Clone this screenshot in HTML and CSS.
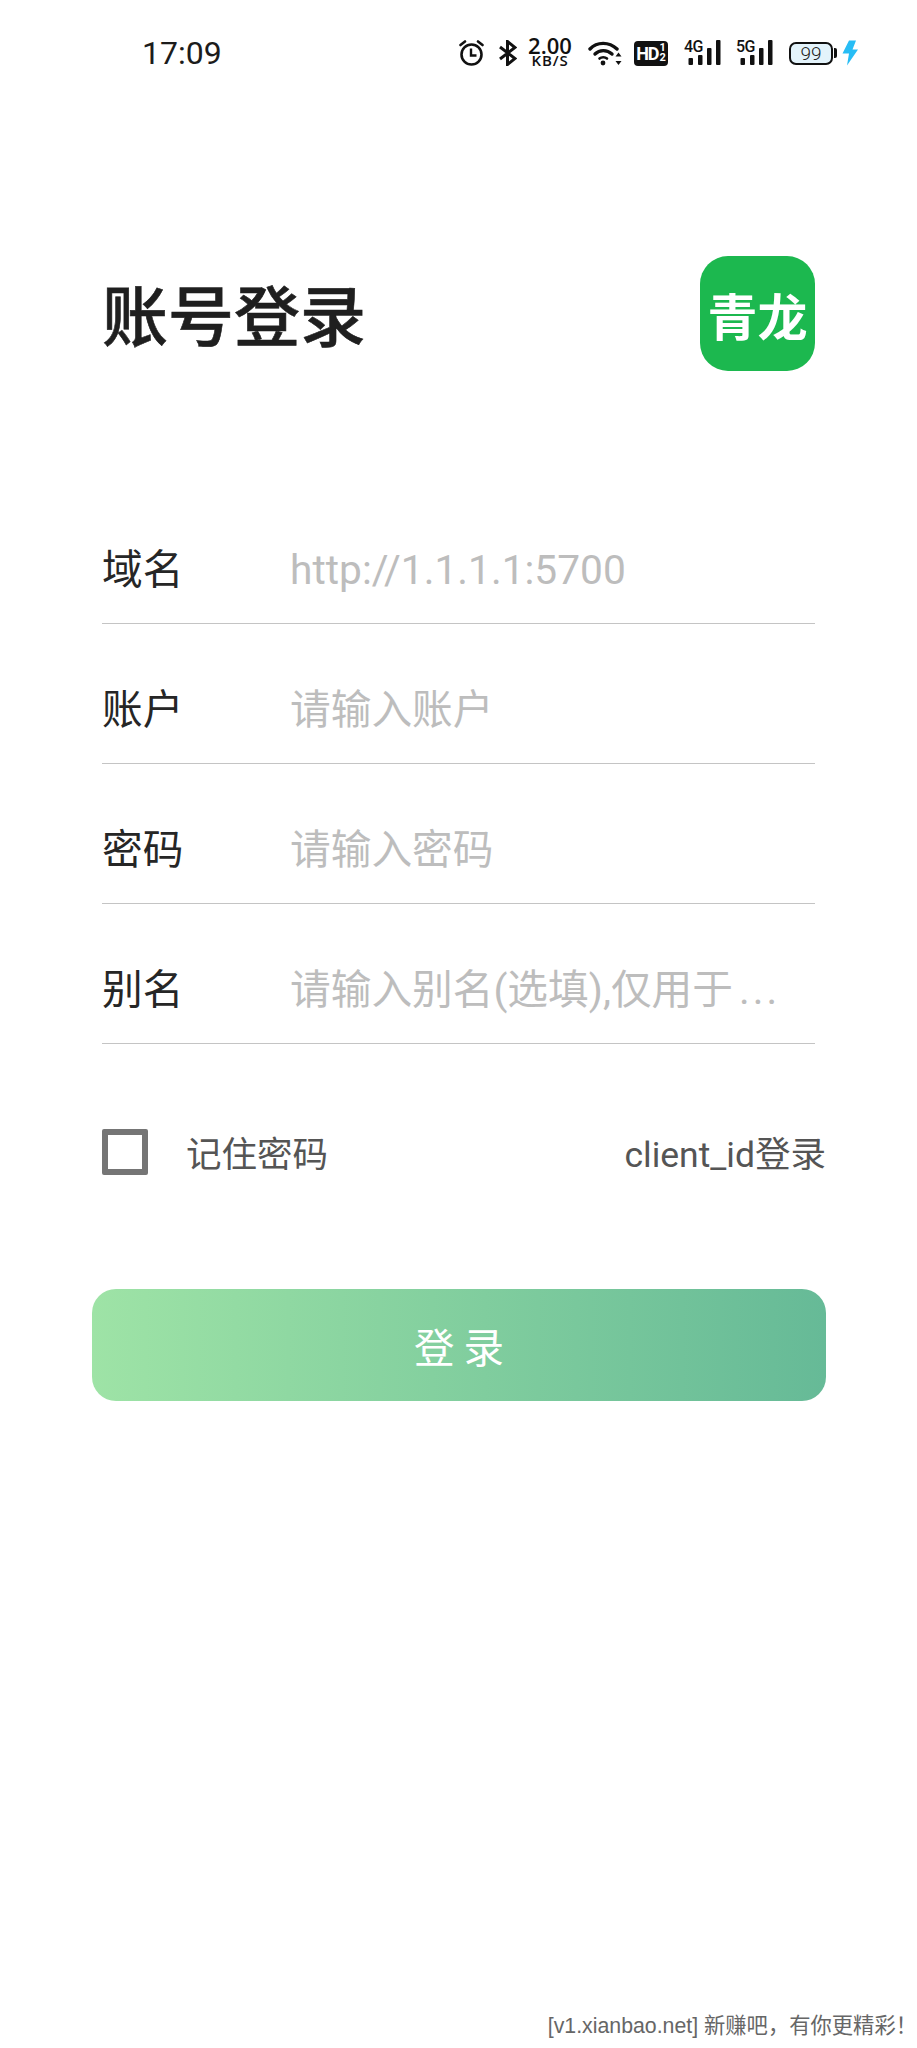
FILE: index.html
```html
<!DOCTYPE html>
<html lang="zh-CN">
<head>
<meta charset="UTF-8" />
<title>账号登录</title>
<link rel="stylesheet" href="styles.css">
</head>
<body>

<!-- Barra de status -->
<div class="status">
  <div class="time">17:09</div>
  <div class="icons">
    <svg class="ic-alarm" width="26" height="26" viewBox="0 0 26 26" fill="none" stroke="#111" stroke-width="2.6">
      <circle cx="12.5" cy="14.5" r="10" />
      <path d="M12 8.5V15.5H17.5" stroke-width="2.4" />
      <path d="M1.5 5L6 1.5M23.5 5L19 1.5" stroke-linecap="round" />
    </svg>
    <svg class="ic-bt" width="18" height="26" viewBox="0 0 18 26" fill="none" stroke="#111" stroke-width="3">
      <path d="M1 7L16 18.5L8.5 24.5V1.5L16 7.5L1 19" />
    </svg>
    <div class="speed">2.00 KB/S</div>
    <svg class="ic-wifi" width="34" height="26" viewBox="0 0 34 26" fill="none" stroke="#111" stroke-width="3.4" stroke-linecap="round">
      <path d="M2 9C9 1.5 21 1.5 29 9" />
      <path d="M7 14C11.5 9.5 19 9.5 24 14" />
      <path d="M11.5 18.5C13.5 16.8 17 16.8 19 18.5" stroke-width="2.6" />
      <circle cx="15" cy="23" r="2.4" fill="#111" stroke="none" />
      <path d="M30.5 12.5L27.5 16.5H33.5ZM30.5 25L27.5 21H33.5Z" fill="#111" stroke="none" />
    </svg>
    <div class="hd"><span class="hd-text">HD</span><span class="hd-frac"><span>1</span><span>2</span></span></div>
    <div class="signal sig-4g">
      <span class="net">4G</span>
      <svg width="37" height="26" viewBox="0 0 37 26" fill="#111">
        <rect x="4.5" y="18" width="4.5" height="7" rx="1" />
        <rect x="14" y="15" width="4.5" height="10" rx="1" />
        <rect x="23" y="8" width="4.5" height="17" rx="1" />
        <rect x="32" y="0" width="4.5" height="25" rx="1" />
      </svg>
    </div>
    <div class="signal">
      <span class="net">5G</span>
      <svg width="37" height="26" viewBox="0 0 37 26" fill="#111">
        <rect x="4.5" y="18" width="4.5" height="7" rx="1" />
        <rect x="14" y="15" width="4.5" height="10" rx="1" />
        <rect x="23" y="8" width="4.5" height="17" rx="1" />
        <rect x="32" y="0" width="4.5" height="25" rx="1" />
      </svg>
    </div>
    <div class="battery"><div class="battery-body">99</div><div class="battery-tip"></div></div>
    <svg class="ic-bolt" width="16" height="26" viewBox="0 0 16 26" fill="#27bdf5">
      <path d="M7 0.5H14L10.5 9.5H16L5 25.5L7 13.5H0.5Z" />
    </svg>
  </div>
</div>

<div class="page">
  <div class="header">
    <h1 class="title">账号登录</h1>
    <div class="logo">青龙</div>
  </div>

  <div class="form">
    <div class="row"><span class="label">域名</span><span class="hint">http://1.1.1.1:5700</span></div>
    <div class="row"><span class="label">账户</span><span class="hint">请输入账户</span></div>
    <div class="row"><span class="label">密码</span><span class="hint">请输入密码</span></div>
    <div class="row"><span class="label">别名</span><span class="hint">请输入别名(选填),仅用于<span class="dots">...</span></span></div>
  </div>

  <div class="options">
    <div class="check"></div>
    <span class="remember">记住密码</span>
    <span class="client">client_id登录</span>
  </div>

  <button class="login" type="button">登录</button>
</div>

<div class="footer">[v1.xianbao.net] 新赚吧，有你更精彩！</div>

</body>
</html>
```

FILE: styles.css
```css
body {
  margin: 0;
  min-height: 2048px;
  background: #fff;
  display: flex;
  flex-direction: column;
  font-family: Roboto, "Noto Sans CJK SC", sans-serif;
  color: #222;
}

/* Barra de status */
.status {
  height: 104px;
  box-sizing: border-box;
  padding: 2px 59px 0 142px;
  display: flex;
  align-items: center;
  justify-content: space-between;
}
.time {
  font-size: 32px;
  color: #1c1c1c;
}
.icons {
  display: flex;
  align-items: center;
}
.ic-alarm { margin-right: 14px; }
.ic-bt { margin-right: 10px; }
.speed {
  width: 46px;
  margin-right: 15px;
  font-family: "Open Sans", sans-serif;
  font-size: 15px;
  font-weight: 600;
  letter-spacing: 0.9px;
  line-height: 15px;
  text-align: center;
  color: #111;
}
.speed::first-line {
  font-size: 22px;
  letter-spacing: 0;
}
.ic-wifi { margin-right: 12px; }
.hd {
  width: 34px;
  height: 25px;
  background: #111;
  border-radius: 4px;
  color: #fff;
  display: flex;
  align-items: center;
  justify-content: center;
  margin-right: 16px;
}
.hd-text {
  font-size: 18px;
  font-weight: 700;
  letter-spacing: -1px;
}
.hd-frac {
  display: flex;
  flex-direction: column;
  font-size: 11px;
  line-height: 10px;
  font-weight: 700;
  margin-left: 1px;
}
.signal {
  position: relative;
  width: 37px;
  height: 26px;
  margin-right: 16px;
}
.sig-4g { margin-right: 15px; }
.signal svg { display: block; }
.net {
  position: absolute;
  top: -1px;
  left: 0;
  font-size: 16px;
  line-height: 15px;
  font-weight: 500;
  color: #111;
  letter-spacing: -0.5px;
}
.battery {
  display: flex;
  align-items: center;
  margin-right: 5px;
}
.battery-body {
  width: 40px;
  height: 19px;
  border: 2.5px solid #111;
  border-radius: 7px;
  background: #e3f3fb;
  font-size: 19px;
  font-weight: 300;
  line-height: 19px;
  text-align: center;
  color: #222;
}
.battery-tip {
  width: 3px;
  height: 10px;
  margin-left: 1px;
  background: #111;
  border-radius: 0 2px 2px 0;
}

/* Conteudo */
.page {
  width: 734px;
  margin-left: 92px;
}
.header {
  display: flex;
  justify-content: space-between;
  align-items: center;
  margin: 152px 11px 0 10px;
}
.title {
  margin: 0 0 4px;
  font-size: 66px;
  font-weight: 500;
  -webkit-text-stroke: 0.6px #1f1f1f;
  color: #1f1f1f;
}
.logo {
  width: 115px;
  height: 115px;
  border-radius: 28px;
  background: #1cb84f;
  color: #fff;
  font-size: 50px;
  font-weight: 700;
  display: flex;
  align-items: center;
  justify-content: center;
  white-space: nowrap;
}
.form {
  margin: 113px 11px 0 10px;
}
.row {
  height: 140px;
  box-sizing: border-box;
  padding-top: 56px;
  border-bottom: 1px solid #c4c4c4;
  display: flex;
  align-items: baseline;
  line-height: 60px;
}
.label {
  width: 188px;
  font-size: 40.7px;
  color: #262626;
}
.hint {
  font-size: 40.7px;
  color: #bdbdbd;
}
.dots {
  margin-left: 6px;
  letter-spacing: 3px;
}
.options {
  display: flex;
  align-items: center;
  margin-top: 82px;
  padding-left: 10px;
}
.check {
  width: 46px;
  height: 46px;
  box-sizing: border-box;
  border: 6px solid #757575;
  border-radius: 2px;
}
.remember {
  margin-left: 38px;
  font-size: 35.5px;
  color: #555;
}
.client {
  margin-left: auto;
  font-size: 35.5px;
  color: #555;
}
.login {
  display: block;
  width: 734px;
  height: 112px;
  margin-top: 112px;
  padding-left: 15px;
  border: none;
  border-radius: 24px;
  background: linear-gradient(90deg, #9ee3a6, #66ba97);
  color: #fff;
  font-family: inherit;
  font-size: 40.5px;
  letter-spacing: 9px;
}

.footer {
  margin-top: auto;
  padding: 0 0 9px 0;
  text-align: right;
  font-size: 21.3px;
  line-height: 26px;
  color: #666;
  font-family: "Liberation Sans", "Noto Sans CJK SC", sans-serif;
}
```
